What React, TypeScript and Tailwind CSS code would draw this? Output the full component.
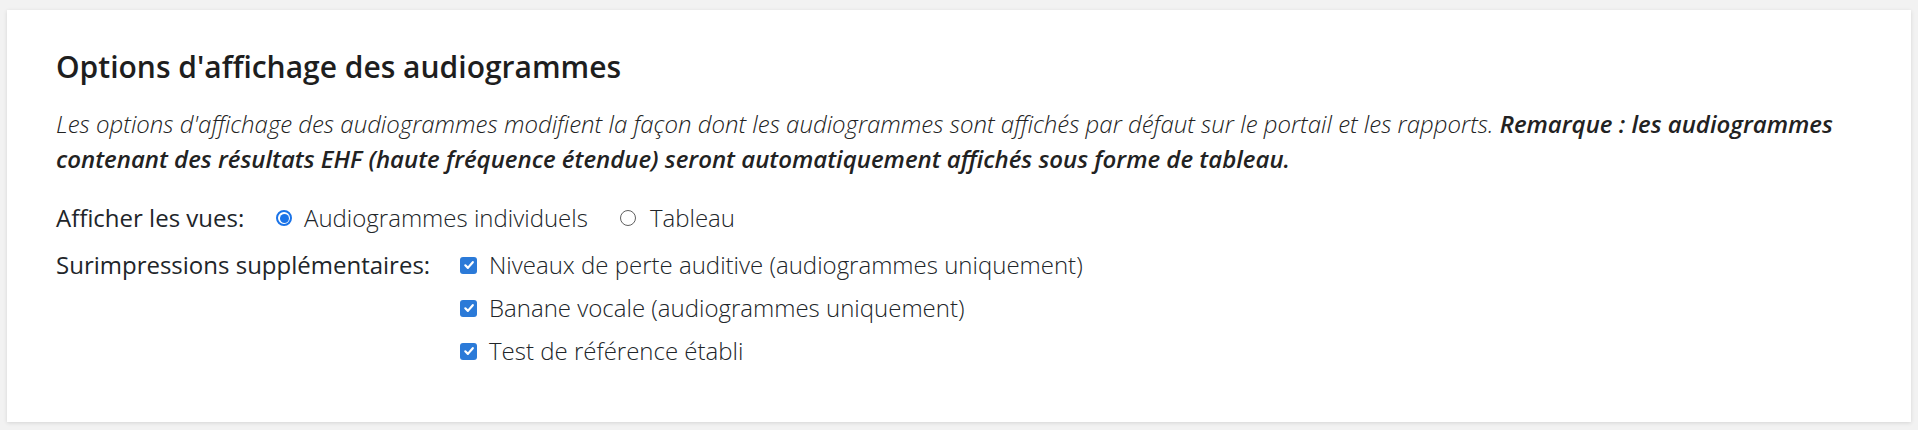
import { useState } from 'react';

const overlays = [
  { id: 'hearing-loss', label: 'Niveaux de perte auditive (audiogrammes uniquement)' },
  { id: 'speech-banana', label: 'Banane vocale (audiogrammes uniquement)' },
  { id: 'baseline', label: 'Test de référence établi' },
];

function Radio({ checked }: { checked: boolean }) {
  return checked ? (
    <span className="flex h-[16px] w-[16px] shrink-0 items-center justify-center rounded-full border-[2px] border-[#1a73e8] bg-white">
      <span className="h-[9px] w-[9px] rounded-full bg-[#1a73e8]" />
    </span>
  ) : (
    <span className="h-[16px] w-[16px] shrink-0 rounded-full border-[1.5px] border-[#5f5f5f] bg-white" />
  );
}

function Checkbox({ checked }: { checked: boolean }) {
  return (
    <span
      className={`flex h-[17px] w-[17px] shrink-0 items-center justify-center rounded-[3px] ${
        checked ? 'bg-[#2b7ad8]' : 'border border-[#767676] bg-white'
      }`}
    >
      {checked && (
        <svg viewBox="0 0 12 12" className="h-[12px] w-[12px]">
          <path d="M2.3 6.3 L4.9 8.9 L9.8 3.2" fill="none" stroke="white" strokeWidth="2.2" strokeLinecap="round" strokeLinejoin="round" />
        </svg>
      )}
    </span>
  );
}

export default function App() {
  const [view, setView] = useState<'single' | 'table'>('single');
  const [checked, setChecked] = useState<Record<string, boolean>>({
    'hearing-loss': true,
    'speech-banana': true,
    baseline: true,
  });

  return (
    <div className="min-h-[430px] bg-[#f2f2f2] px-[7px] pt-[10px] pb-[8px] font-['Open_Sans',sans-serif] text-[#212529]">
      <div className="bg-white px-[49px] pt-[37px] pb-[54px] shadow-[0_1px_4px_rgba(0,0,0,0.12)]">
        <h2 className="text-[30px] font-semibold leading-[40px] text-[#1e1e1e]">Options d'affichage des audiogrammes</h2>

        <p className="mt-[19px] text-[24px] italic leading-[35px] text-[#222]">
          <span className="font-light">
            Les options d'affichage des audiogrammes modifient la façon dont les audiogrammes sont affichés par défaut sur le portail et les rapports.{' '}
          </span>
          <span className="font-semibold">
            Remarque : les audiogrammes contenant des résultats EHF (haute fréquence étendue) seront automatiquement affichés sous forme de tableau.
          </span>
        </p>

        <div className="mt-[25px] flex items-center text-[24px] leading-[34px]">
          <span className="w-[220px]">Afficher les vues:</span>
          <label className="flex cursor-pointer items-center gap-[12px]" onClick={() => setView('single')}>
            <Radio checked={view === 'single'} />
            <span className="font-light">Audiogrammes individuels</span>
          </label>
          <label className="ml-[32px] flex cursor-pointer items-center gap-[14px]" onClick={() => setView('table')}>
            <Radio checked={view === 'table'} />
            <span className="font-light">Tableau</span>
          </label>
        </div>

        <div className="mt-[13px] flex text-[24px] leading-[34px]">
          <span className="w-[404px]">Surimpressions supplémentaires:</span>
          <div className="flex flex-col gap-[9px]">
            {overlays.map((o) => (
              <label
                key={o.id}
                className="flex cursor-pointer items-center gap-[12px]"
                onClick={() => setChecked({ ...checked, [o.id]: !checked[o.id] })}
              >
                <Checkbox checked={checked[o.id]} />
                <span className="font-light">{o.label}</span>
              </label>
            ))}
          </div>
        </div>
      </div>
    </div>
  );
}
